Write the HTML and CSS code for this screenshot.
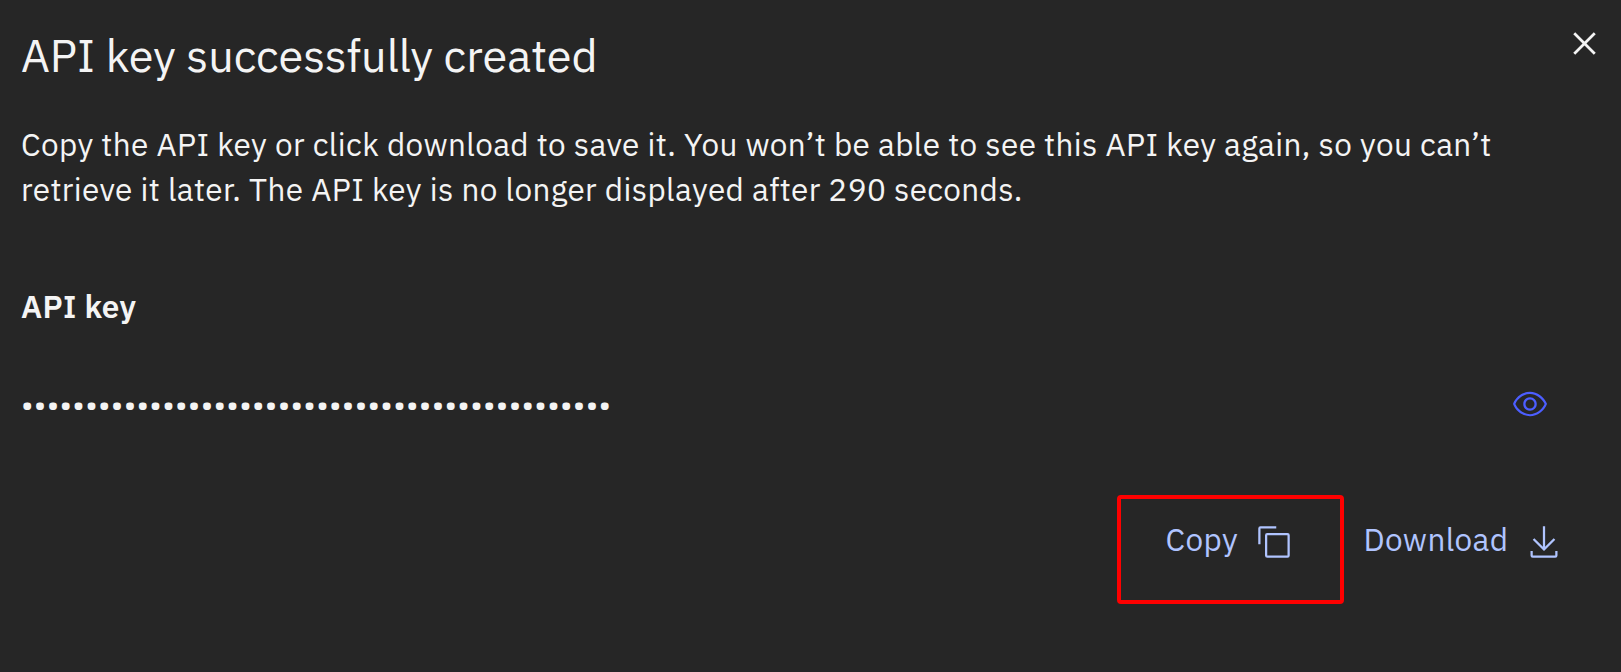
FILE: index.html
```html
<!DOCTYPE html>
<html lang="en">
<head>
<meta charset="utf-8">
<title>API key successfully created</title>
<link rel="stylesheet" href="styles.css">
</head>
<body>
<main class="modal">
  <header class="header">
    <h1 class="title">API key successfully created</h1>
    <button class="close" aria-label="Close">
      <svg viewBox="0 0 32 32"><path d="M24 9.4 22.6 8 16 14.6 9.4 8 8 9.4l6.6 6.6L8 22.6 9.4 24l6.6-6.6 6.6 6.6 1.4-1.4-6.6-6.6L24 9.4z"/></svg>
    </button>
  </header>
  <p class="message">Copy the API key or click download to save it. You won’t be able to see this API key again, so you can’t<br>retrieve it later. The API key is no longer displayed after 290 seconds.</p>
  <h2 class="label">API key</h2>
  <div class="key-row">
    <span class="dots">••••••••••••••••••••••••••••••••••••••••••••••</span>
    <button class="reveal" aria-label="Show API key">
      <svg viewBox="0 0 16 16"><path d="M15.5 7.8C14.3 4.7 11.3 2.6 8 2.5 4.7 2.6 1.7 4.7.5 7.8c0 .1 0 .2 0 .3 1.2 3.1 4.1 5.2 7.5 5.3 3.3-.1 6.3-2.2 7.5-5.3 0 0 0-.2 0-.3zM8 12.5c-2.7 0-5.4-2-6.5-4.5 1-2.5 3.8-4.5 6.5-4.5s5.4 2 6.5 4.5c-1.1 2.5-3.9 4.5-6.5 4.5z"/><path d="M8 5C6.3 5 5 6.3 5 8s1.3 3 3 3 3-1.3 3-3-1.3-3-3-3zm0 5c-1.1 0-2-.9-2-2s.9-2 2-2 2 .9 2 2-.9 2-2 2z"/></svg>
    </button>
  </div>
  <footer class="actions">
    <button class="action copy"><span class="copy-text">Copy</span>
      <svg viewBox="0 0 32 32"><path d="M28 10v18H10V10h18m0-2H10a2 2 0 0 0-2 2v18a2 2 0 0 0 2 2h18a2 2 0 0 0 2-2V10a2 2 0 0 0-2-2z"/><path d="M4 18H2V4a2 2 0 0 1 2-2h14v2H4z"/></svg>
    </button>
    <button class="action download"><span class="download-text">Download</span>
      <svg viewBox="0 0 32 32"><path d="M26 24v4H6v-4H4v4a2 2 0 0 0 2 2h20a2 2 0 0 0 2-2v-4zM26 14l-1.41-1.41L17 20.17V2h-2v18.17l-7.59-7.58L6 14l10 10z"/></svg>
    </button>
  </footer>
</main>
</body>
</html>
```
FILE: styles.css
```css
* { box-sizing: border-box; }
body {
  margin: 0;
  background: #262626;
  color: #f4f4f4;
  font-family: "IBM Plex Sans", "Noto Sans", sans-serif;
  font-size: 31.5px;
  letter-spacing: 0.36px;
}
button {
  display: flex;
  padding: 0;
  border: 0;
  background: none;
  color: inherit;
  font: inherit;
  letter-spacing: inherit;
}
svg { display: block; width: 36px; height: 36px; fill: currentColor; flex: none; }
h1, h2, p { margin: 0; }
.modal {
  display: flex;
  flex-direction: column;
  height: 672px;
  padding: 21px 14px 0 21px;
}
.header { display: flex; justify-content: space-between; height: 101px; }
.title {
  padding-top: 3px;
  font-size: 45px;
  font-weight: 400;
  line-height: 63px;
  letter-spacing: 0;
  white-space: nowrap;
}
.close svg { width: 45px; height: 45px; }
.close { align-self: flex-start; }
.message { height: 162px; line-height: 45px; white-space: nowrap; }
.label { height: 45px; font-size: 31.5px; line-height: 45px; font-weight: 600; }
.key-row {
  display: flex;
  align-items: center;
  justify-content: space-between;
  height: 36px;
  margin-top: 57px;
  padding-right: 59px;
}
.dots { padding-top: 1px; line-height: 36px; white-space: nowrap; }
.reveal { color: #4c5eff; }
.actions {
  display: flex;
  align-items: flex-start;
  justify-content: flex-end;
  margin-top: 73px;
  padding-right: 45px;
  color: #b0c4ff;
  line-height: 45px;
}
.action { align-items: flex-start; }
.action svg { margin-top: 29px; }
.copy {
  width: 227px;
  height: 109px;
  padding-left: 44.5px;
  border: 4px solid #fe0000;
  border-radius: 4px;
}
.copy svg { margin-top: 25px; }
.copy-text { width: 90.5px; padding-top: 18px; text-align: left; }
.download { padding-left: 19.5px; }
.download-text { width: 162.5px; padding-top: 22px; text-align: left; }
```
